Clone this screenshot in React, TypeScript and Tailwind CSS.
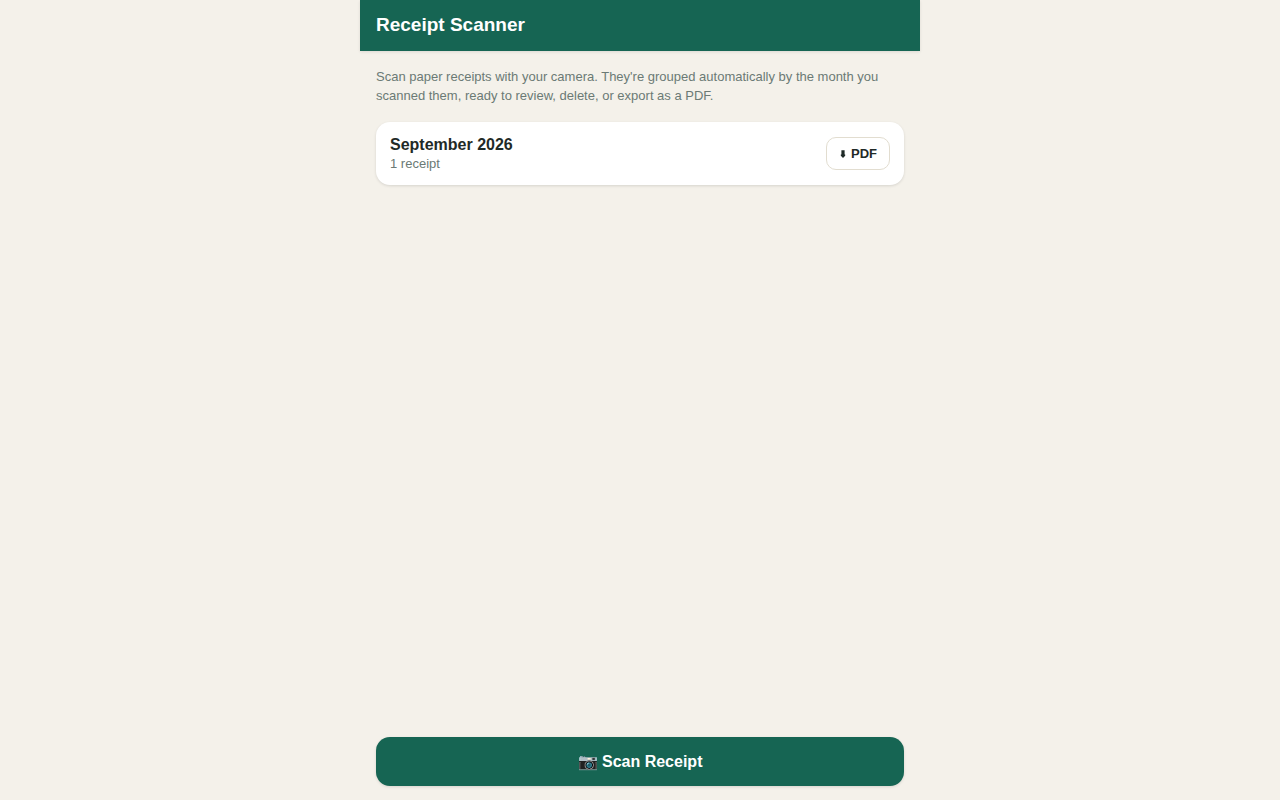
export default function App() {
  return (
    <div className="min-h-screen bg-[#f4f1ea] font-['Liberation_Sans',Arial,sans-serif] text-[#1f2a27]">
      <div className="mx-auto flex min-h-screen max-w-[560px] flex-col">
        <header className="bg-[#166553] px-4 pt-3 pb-3.5 text-white shadow-[0_1px_3px_rgba(0,0,0,0.1)]">
          <h1 className="text-[19px] leading-[25px] font-bold">Receipt Scanner</h1>
        </header>
        <main className="flex flex-1 flex-col gap-[17px] p-4">
          <p className="text-[13px] leading-[19px] text-[#6b7a75]">
            Scan paper receipts with your camera. They're grouped automatically by the month you scanned them, ready to
            review, delete, or export as a PDF.
          </p>
          <section className="flex items-center justify-between rounded-[14px] bg-white px-3.5 py-[13px] shadow-[0_1px_3px_rgba(0,0,0,0.12)]">
            <div>
              <h2 className="text-base leading-[20px] font-bold">September 2026</h2>
              <p className="text-[13px] leading-[17px] text-[#6b7a75]">1 receipt</p>
            </div>
            <button className="flex items-center gap-1 rounded-[10px] border border-[#e2ddd0] bg-white px-3 py-2 text-[13px] leading-[15px] font-bold">
              <svg className="size-2" viewBox="0 0 8 8" fill="currentColor" aria-hidden="true">
                <path d="M2.4 0.2H5.6V4.6H6.2V5.8L4 8L1.8 5.8V4.6H2.4Z" />
              </svg>
              PDF
            </button>
          </section>
        </main>
        <footer className="sticky bottom-0 px-4 pb-3.5">
          <button className="w-full rounded-[14px] bg-[#166553] p-3.5 text-base leading-[21px] font-bold text-white shadow-[0_1px_3px_rgba(0,0,0,0.12)]">
            📷 Scan Receipt
          </button>
        </footer>
      </div>
    </div>
  );
}
